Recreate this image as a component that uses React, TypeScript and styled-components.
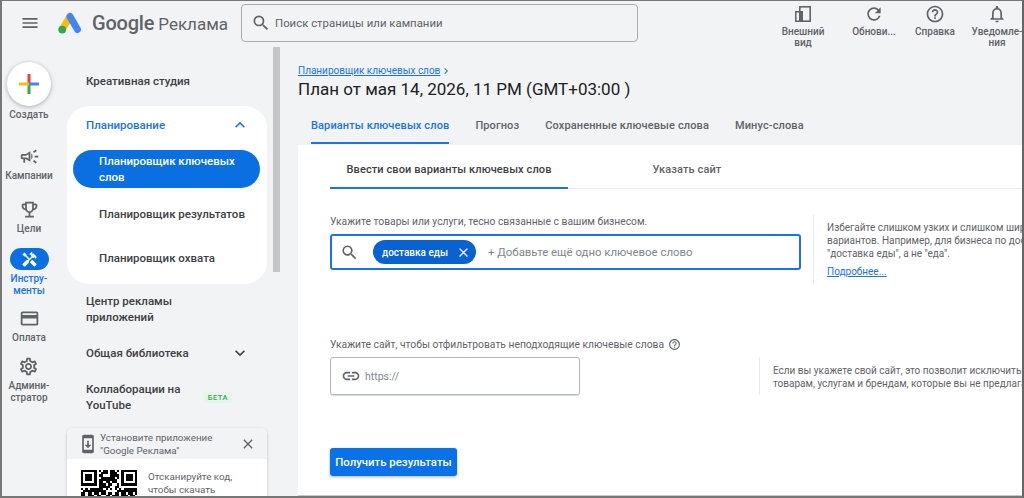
import styled, { createGlobalStyle } from "styled-components";
import {
  MdChevronRight,
  MdClose,
  MdExpandLess,
  MdExpandMore,
  MdHandyman,
  MdHelpOutline,
  MdLink,
  MdMenu,
  MdOutlineCampaign,
  MdOutlineCreditCard,
  MdOutlineEmojiEvents,
  MdOutlineNotifications,
  MdOutlineSettings,
  MdOutlineSystemUpdate,
  MdRefresh,
  MdSearch,
} from "react-icons/md";

const GlobalStyle = createGlobalStyle`
  html, body {
    margin: 0;
    padding: 0;
    background: #f1f3f4;
    font-family: Roboto, "Noto Sans", sans-serif;
  }
  * {
    box-sizing: border-box;
  }
`;

const Frame = styled.div`
  width: 1024px;
  height: 498px;
  overflow: hidden;
  display: flex;
  flex-direction: column;
  background: #f1f3f4;
  border-top: 1px solid #777;
  border-left: 2px solid #777;
  border-right: 2px solid #666;
  border-bottom: 2px solid #777;
  color: #3c4043;
`;

const Header = styled.header`
  display: flex;
  align-items: flex-start;
  height: 46px;
  flex-shrink: 0;
`;

const MenuButton = styled.div`
  width: 56px;
  height: 44px;
  display: flex;
  align-items: center;
  padding-left: 18px;
  color: #5f6368;
`;

const Brand = styled.div`
  display: flex;
  align-items: center;
  width: 183px;
  height: 44px;
  gap: 10px;
  font-size: 17px;
  color: #5f6368;
  white-space: nowrap;

  b {
    font-size: 20px;
    font-weight: 500;
    letter-spacing: -0.2px;
    margin-right: 4px;
  }
`;

const SearchBox = styled.div`
  display: flex;
  align-items: center;
  width: 397px;
  height: 38px;
  margin-top: 3px;
  padding-left: 9px;
  gap: 4px;
  border: 1px solid #a8abaf;
  border-radius: 4px;
  font-size: 11.4px;
  color: #5f6368;
`;

const HeaderActions = styled.div`
  display: flex;
  margin-left: auto;
  margin-right: -5px;
  padding-top: 3px;
`;

const Action = styled.div<{ $ml?: number }>`
  width: 60px;
  margin-left: ${(p) => p.$ml ?? 0}px;
  display: flex;
  flex-direction: column;
  align-items: center;
  color: #5f6368;
  font-size: 10px;
  font-weight: 500;
  line-height: 11px;
  text-align: center;
  white-space: nowrap;

  svg {
    margin-bottom: 2px;
  }
`;

const Body = styled.div`
  display: flex;
  flex: 1;
  min-height: 0;
`;

const Rail = styled.nav`
  width: 54px;
  flex-shrink: 0;
  display: flex;
  flex-direction: column;
  align-items: center;
`;

const CreateButton = styled.div`
  width: 44px;
  height: 44px;
  margin-top: 15px;
  border-radius: 50%;
  background: #fff;
  box-shadow: 0 1px 4px rgba(60, 64, 67, 0.4);
  display: flex;
  align-items: center;
  justify-content: center;
`;

const CreateLabel = styled.div`
  margin: 3px 0 24px;
  font-size: 10px;
  font-weight: 500;
  line-height: 12px;
  color: #5f6368;
`;

const RailItem = styled.div<{ $active?: boolean; $mb: number }>`
  display: flex;
  flex-direction: column;
  align-items: center;
  margin-bottom: ${(p) => p.$mb}px;
  font-size: 10px;
  font-weight: 500;
  line-height: 12px;
  text-align: center;
  color: ${(p) => (p.$active ? "#1a73e8" : "#5f6368")};
`;

const RailIcon = styled.div<{ $active?: boolean }>`
  width: 39px;
  height: 22px;
  margin-bottom: 3px;
  border-radius: 11px;
  display: flex;
  align-items: center;
  justify-content: center;
  background: ${(p) => (p.$active ? "#0a6fe0" : "transparent")};
  color: ${(p) => (p.$active ? "#fff" : "#5f6368")};
`;

const SideWrap = styled.div`
  width: 224px;
  flex-shrink: 0;
  display: flex;
`;

const SideNav = styled.div`
  width: 217px;
  padding-left: 11px;
  padding-top: 26px;
  font-size: 11.5px;
  font-weight: 500;
  line-height: 16px;
  color: #3c4043;
`;

const Scrollbar = styled.div`
  width: 7px;
  height: 225px;
  background: #c4c5c7;
`;

const NavRow = styled.div<{ $mt?: number }>`
  display: flex;
  align-items: center;
  justify-content: space-between;
  width: 200px;
  padding: 0 17px 0 19px;
  margin-top: ${(p) => p.$mt ?? 0}px;
`;

const PlanCard = styled.div`
  width: 200px;
  height: 178px;
  margin-top: 17px;
  padding-top: 9px;
  background: #fff;
  border-radius: 22px;
`;

const PlanTitle = styled(NavRow)`
  color: #1a73e8;
  margin-bottom: 15px;
`;

const SubItem = styled.div<{ $active?: boolean; $mt?: number }>`
  width: 187px;
  margin: ${(p) => p.$mt ?? 0}px 0 0 6px;
  padding: ${(p) => (p.$active ? "3px 6px 3px 26px" : "0 6px 0 26px")};
  border-radius: 19px;
  background: ${(p) => (p.$active ? "#0a6fe0" : "transparent")};
  color: ${(p) => (p.$active ? "#fff" : "#3c4043")};
`;

const BetaBadge = styled.span`
  padding: 1px 4px;
  background: #e6f4ea;
  border-radius: 2px;
  font-size: 7.5px;
  line-height: 9px;
  letter-spacing: 0.5px;
  color: #34a853;
  margin-right: 18px;
`;

const InstallPanel = styled.div`
  width: 200px;
  margin-top: 15px;
  background: #fff;
  border-radius: 6px 6px 0 0;
  box-shadow: 0 1px 3px rgba(60, 64, 67, 0.3);
`;

const InstallHead = styled.div`
  height: 31px;
  display: flex;
  align-items: center;
  padding: 0 11px 0 11px;
  background: #f1f3f4;
  border-radius: 6px 6px 0 0;
  color: #5f6368;
  font-size: 9.8px;
  font-weight: 400;
  line-height: 13px;

  span {
    flex: 1;
    margin-left: 2px;
  }
`;

const InstallBody = styled.div`
  display: flex;
  gap: 11px;
  padding: 11px 0 0 14px;
  color: #5f6368;
  font-size: 9.8px;
  font-weight: 400;
  line-height: 13px;
`;

const Main = styled.main`
  flex: 1;
  min-width: 0;
  display: flex;
  flex-direction: column;
  padding: 18px 0 0 18px;
`;

const Crumb = styled.div`
  display: flex;
  align-items: center;
  font-size: 10px;
  line-height: 12px;
  color: #1a73e8;

  a {
    text-decoration: underline;
  }
`;

const Title = styled.h1`
  margin: 0;
  font-size: 17px;
  font-weight: 400;
  line-height: 24px;
  color: #202124;
  white-space: nowrap;
`;

const Tabs = styled.div`
  display: flex;
  gap: 26px;
  height: 31px;
  margin-top: 13px;
  padding-left: 13px;
  font-size: 11px;
  font-weight: 500;
  letter-spacing: 0.12px;
  white-space: nowrap;
`;

const Tab = styled.div<{ $active?: boolean }>`
  height: 30px;
  padding-top: 4px;
  line-height: 16px;
  color: ${(p) => (p.$active ? "#1a73e8" : "#5f6368")};
  border-bottom: ${(p) => (p.$active ? "2px solid #1a73e8" : "none")};
`;

const Card = styled.section`
  height: 350px;
  flex-shrink: 0;
  background: #fff;
  padding: 0 0 0 32px;
  box-shadow: 0 1px 0 #c8c8c8;
`;

const InnerTabs = styled.div`
  display: flex;
  height: 44px;
  border-bottom: 1px solid #e8eaed;
  font-size: 11px;
  font-weight: 500;
  letter-spacing: 0.1px;
  white-space: nowrap;
`;

const InnerTab = styled.div<{ $active?: boolean }>`
  width: 238px;
  height: 44px;
  padding-top: 17px;
  line-height: 16px;
  text-align: center;
  color: ${(p) => (p.$active ? "#3c4043" : "#5f6368")};
  border-bottom: ${(p) => (p.$active ? "2px solid #1a73e8" : "none")};
`;

const FieldRow = styled.div<{ $mt: number }>`
  display: flex;
  margin-top: ${(p) => p.$mt}px;
  white-space: nowrap;
`;

const Field = styled.div<{ $w: number }>`
  width: ${(p) => p.$w}px;
  flex-shrink: 0;
`;

const FieldLabel = styled.div`
  display: flex;
  align-items: center;
  gap: 4px;
  height: 14px;
  margin-bottom: 6px;
  padding-top: 1px;
  font-size: 10.3px;
  line-height: 14px;
  color: #5f6368;
`;

const KeywordInput = styled.div`
  width: 471px;
  height: 36px;
  display: flex;
  align-items: center;
  padding-left: 8px;
  border: 2px solid #1a73e8;
  border-radius: 3px;
  color: #5f6368;
`;

const Chip = styled.div`
  display: flex;
  align-items: center;
  justify-content: space-between;
  width: 103px;
  height: 24px;
  margin-left: 14px;
  margin-right: 12px;
  padding: 0 5px 0 9px;
  border-radius: 12px;
  background: #0a62d0;
  color: #fff;
  font-size: 10px;
  font-weight: 500;
`;

const Placeholder = styled.span`
  font-size: 11.4px;
  color: #80868b;
`;

const SiteInput = styled.div`
  width: 250px;
  height: 38px;
  display: flex;
  align-items: center;
  gap: 4px;
  padding-left: 10px;
  border: 1px solid #b4b7bb;
  border-radius: 3px;
  box-shadow: 0 1px 1px rgba(60, 64, 67, 0.2);
  color: #5f6368;
  font-size: 10.5px;

  span {
    color: #80868b;
  }
`;

const Hint = styled.aside<{ $ml?: number; $mt?: number; $h: number }>`
  height: ${(p) => p.$h}px;
  margin: ${(p) => p.$mt ?? 0}px 0 0 ${(p) => p.$ml ?? 0}px;
  padding: 7px 0 0 13px;
  border-left: 1px solid #e8eaed;
  font-size: 10px;
  line-height: 13px;
  color: #5f6368;

  a {
    display: block;
    margin-top: 5px;
    color: #1a73e8;
    text-decoration: underline;
  }
`;

const SubmitButton = styled.button`
  display: block;
  width: 127px;
  height: 28px;
  margin-top: 53px;
  padding: 0;
  border: none;
  border-radius: 3px;
  background: #0a72e8;
  box-shadow: 0 1px 3px rgba(60, 64, 67, 0.4);
  color: #fff;
  font-family: inherit;
  font-size: 11.4px;
  font-weight: 500;
`;

const AdsLogo = () => (
  <svg width="24" height="22" viewBox="0 0 24 22">
    <path d="M4.5 17 L12 4.5" stroke="#fbbc04" strokeWidth="7" strokeLinecap="round" />
    <path d="M12 4.5 L19.5 17.5" stroke="#4285f4" strokeWidth="7" strokeLinecap="round" />
    <circle cx="4.2" cy="17.6" r="3.9" fill="#34a853" />
  </svg>
);

const PlusIcon = () => (
  <svg width="20" height="20" viewBox="0 0 20 20">
    <rect x="8.5" y="0" width="3" height="10" fill="#ea4335" />
    <rect x="8.5" y="10" width="3" height="10" fill="#34a853" />
    <rect x="0" y="8.5" width="10" height="3" fill="#fbbc04" />
    <rect x="10" y="8.5" width="10" height="3" fill="#4285f4" />
  </svg>
);

const AppearanceIcon = () => (
  <svg width="18" height="20" viewBox="0 0 18 20" fill="none">
    <rect x="5.8" y="2.8" width="10.4" height="14.4" stroke="#5f6368" strokeWidth="1.6" />
    <rect x="1" y="7" width="8" height="11" fill="#5f6368" />
    <rect x="2.5" y="8.5" width="2.5" height="8" fill="#f1f3f4" />
  </svg>
);

// псевдо QR: матрица считается один раз из простого хеша
const qrCells = (() => {
  const size = 25;
  const cells: { x: number; y: number }[] = [];
  const finder = (x: number, y: number, ox: number, oy: number) => {
    const dx = x - ox;
    const dy = y - oy;
    if (dx < 0 || dy < 0 || dx > 6 || dy > 6) return null;
    const ring = dx === 0 || dy === 0 || dx === 6 || dy === 6;
    const core = dx >= 2 && dx <= 4 && dy >= 2 && dy <= 4;
    return ring || core;
  };
  for (let y = 0; y < size; y++) {
    for (let x = 0; x < size; x++) {
      const f =
        finder(x, y, 0, 0) ?? finder(x, y, 18, 0) ?? finder(x, y, 0, 18);
      const inGap = (x < 8 && y < 8) || (x > 16 && y < 8) || (x < 8 && y > 16);
      const on = f ?? (!inGap && (x * 7 + y * 13 + ((x * y) % 5)) % 3 !== 0);
      if (on) cells.push({ x, y });
    }
  }
  return cells;
})();

const QrSvg = styled.svg`
  flex-shrink: 0;
`;

const QrCode = () => (
  <QrSvg width="56" height="56" viewBox="0 0 25 25" shapeRendering="crispEdges">
    {qrCells.map((c) => (
      <rect key={`${c.x}-${c.y}`} x={c.x} y={c.y} width="1" height="1" fill="#000" />
    ))}
  </QrSvg>
);

const App = () => {
  return (
    <Frame>
      <GlobalStyle />
      <Header>
        <MenuButton>
          <MdMenu size={20} />
        </MenuButton>
        <Brand>
          <AdsLogo />
          <span>
            <b>Google</b>Реклама
          </span>
        </Brand>
        <SearchBox>
          <MdSearch size={20} />
          Поиск страницы или кампании
        </SearchBox>
        <HeaderActions>
          <Action>
            <AppearanceIcon />
            Внешний
            <br />
            вид
          </Action>
          <Action $ml={11}>
            <MdRefresh size={20} />
            Обнови...
          </Action>
          <Action $ml={1}>
            <MdHelpOutline size={20} />
            Справка
          </Action>
          <Action $ml={2}>
            <MdOutlineNotifications size={20} />
            Уведомле-
            <br />
            ния
          </Action>
        </HeaderActions>
      </Header>

      <Body>
        <Rail>
          <CreateButton>
            <PlusIcon />
          </CreateButton>
          <CreateLabel>Создать</CreateLabel>
          <RailItem $mb={16}>
            <RailIcon>
              <MdOutlineCampaign size={21} />
            </RailIcon>
            Кампании
          </RailItem>
          <RailItem $mb={13}>
            <RailIcon>
              <MdOutlineEmojiEvents size={21} />
            </RailIcon>
            Цели
          </RailItem>
          <RailItem $active $mb={10}>
            <RailIcon $active>
              <MdHandyman size={17} />
            </RailIcon>
            Инстру-
            <br />
            менты
          </RailItem>
          <RailItem $mb={11}>
            <RailIcon>
              <MdOutlineCreditCard size={21} />
            </RailIcon>
            Оплата
          </RailItem>
          <RailItem $mb={0}>
            <RailIcon>
              <MdOutlineSettings size={21} />
            </RailIcon>
            Админи-
            <br />
            стратор
          </RailItem>
        </Rail>

        <SideWrap>
          <SideNav>
            <NavRow>Креативная студия</NavRow>
            <PlanCard>
              <PlanTitle>
                Планирование
                <MdExpandLess size={20} />
              </PlanTitle>
              <SubItem $active>Планировщик ключевых слов</SubItem>
              <SubItem $mt={18}>Планировщик результатов</SubItem>
              <SubItem $mt={28}>Планировщик охвата</SubItem>
            </PlanCard>
            <NavRow $mt={9}>
              <span>
                Центр рекламы
                <br />
                приложений
              </span>
            </NavRow>
            <NavRow $mt={18}>
              Общая библиотека
              <MdExpandMore size={20} />
            </NavRow>
            <NavRow $mt={18}>
              <span>
                Коллаборации на
                <br />
                YouTube
              </span>
              <BetaBadge>БЕТА</BetaBadge>
            </NavRow>
            <InstallPanel>
              <InstallHead>
                <MdOutlineSystemUpdate size={20} />
                <span>
                  Установите приложение
                  <br />
                  "Google Реклама"
                </span>
                <MdClose size={16} />
              </InstallHead>
              <InstallBody>
                <QrCode />
                <div>
                  Отсканируйте код,
                  <br />
                  чтобы скачать
                </div>
              </InstallBody>
            </InstallPanel>
          </SideNav>
          <Scrollbar />
        </SideWrap>

        <Main>
          <Crumb>
            <a>Планировщик ключевых слов</a>
            <MdChevronRight size={12} />
          </Crumb>
          <Title>План от мая 14, 2026, 11 PM (GMT+03:00 )</Title>
          <Tabs>
            <Tab $active>Варианты ключевых слов</Tab>
            <Tab>Прогноз</Tab>
            <Tab>Сохраненные ключевые слова</Tab>
            <Tab>Минус-слова</Tab>
          </Tabs>
          <Card>
            <InnerTabs>
              <InnerTab $active>Ввести свои варианты ключевых слов</InnerTab>
              <InnerTab>Указать сайт</InnerTab>
            </InnerTabs>
            <FieldRow $mt={25}>
              <Field $w={471}>
                <FieldLabel>Укажите товары или услуги, тесно связанные с вашим бизнесом.</FieldLabel>
                <KeywordInput>
                  <MdSearch size={19} />
                  <Chip>
                    доставка еды
                    <MdClose size={15} />
                  </Chip>
                  <Placeholder>+ Добавьте ещё одно ключевое слово</Placeholder>
                </KeywordInput>
              </Field>
              <Hint $ml={12} $h={70}>
                Избегайте слишком узких и слишком широких
                <br />
                вариантов. Например, для бизнеса по доставке
                <br />
                "доставка еды", а не "еда".
                <a>Подробнее...</a>
              </Hint>
            </FieldRow>
            <FieldRow $mt={53}>
              <Field $w={429}>
                <FieldLabel>
                  Укажите сайт, чтобы отфильтровать неподходящие ключевые слова
                  <MdHelpOutline size={13} />
                </FieldLabel>
                <SiteInput>
                  <MdLink size={20} />
                  <span>https://</span>
                </SiteInput>
              </Field>
              <Hint $mt={20} $h={38}>
                Если вы укажете свой сайт, это позволит исключить
                <br />
                товарам, услугам и брендам, которые вы не предлагаете
              </Hint>
            </FieldRow>
            <SubmitButton>Получить результаты</SubmitButton>
          </Card>
        </Main>
      </Body>
    </Frame>
  );
};

export default App;
